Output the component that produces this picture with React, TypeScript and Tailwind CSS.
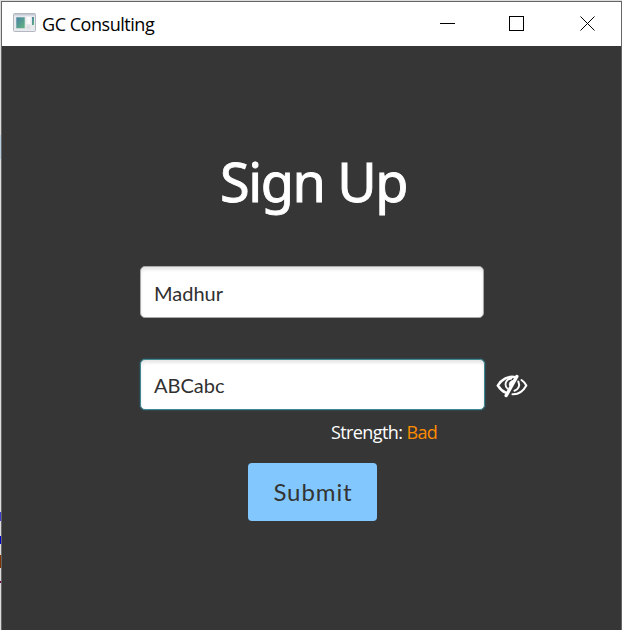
function AppIcon() {
  return (
    <svg width="24" height="20" viewBox="0 0 24 20">
      <defs>
        <linearGradient id="pane" x1="0" y1="0" x2="1" y2="1">
          <stop offset="0" stopColor="#4a7fa8" />
          <stop offset="1" stopColor="#63b87c" />
        </linearGradient>
      </defs>
      <rect x="0.5" y="0.5" width="22" height="18" rx="1" fill="#e9eaee" stroke="#b3b7c1" />
      <rect x="1" y="1" width="21" height="1.500" fill="#c5cad4" />
      <rect x="3" y="4" width="9" height="11.500" fill="url(#pane)" stroke="#dfe3e6" strokeWidth="0.600" />
      <rect x="13.500" y="4" width="4" height="7" fill="#fafafa" />
      <rect x="19" y="4" width="2" height="8" fill="url(#pane)" />
      <rect x="13.500" y="12.500" width="4" height="3.500" fill="#dddfe3" />
    </svg>
  );
}

function EyeOff() {
  return (
    <svg width="32" height="24" viewBox="0 0 32 24" fill="none" stroke="#fff" strokeLinecap="round">
      <path d="M20 3.300C11.500 1.300 5 6 1.800 11.500C4 15 6.500 17.300 9.800 18.700" strokeWidth="2.400" />
      <path d="M25.500 6C27.700 7.500 29.200 9.300 30.300 11.500C27 17.500 21.500 20.500 16.500 20.200" strokeWidth="2.100" />
      <path d="M15.500 4.500C9.500 5 8 11 11.300 14.500" strokeWidth="1.800" />
      <path d="M22.300 7.500C24.500 12 22 15.700 18.500 16.700" strokeWidth="2" />
      <path d="M17.500 6.500C14.500 6.500 13 8.500 13.300 11.500L15 12Z" fill="#fff" strokeWidth="1" />
      <path d="M20.800 2.500L10.200 21.500" strokeWidth="3.500" />
    </svg>
  );
}

export default function App() {
  return (
    <div className="flex h-[630px] w-[622px] overflow-hidden bg-[#dcdcdc] pt-px font-['Open_Sans',sans-serif]">
      <div className="flex w-px shrink-0 flex-col">
        <div className="h-[134px]" />
        <div className="h-[24px] bg-[#b7cfe0]" />
        <div className="h-[353px]" />
        <div className="h-[9px] bg-[#4040d0]" />
        <div className="h-[15px]" />
        <div className="h-[8px] bg-[#0000cc]" />
        <div className="h-[11px]" />
        <div className="h-[13px] bg-[#803300]" />
        <div className="h-[13px]" />
        <div className="h-[2px] bg-[#700050]" />
      </div>
      <div className="flex min-w-0 flex-1 flex-col border-x border-t border-[#666] bg-[#363636]">
        <header className="flex h-[44px] shrink-0 items-center bg-white pl-[11px] text-black">
          <div className="-mt-0.5"><AppIcon /></div>
          <h1 className="ml-[5px] -mt-px whitespace-nowrap text-[18px] leading-6 tracking-[-0.460px]">GC Consulting</h1>
          <svg className="-mt-0.5 ml-auto mr-[25px]" width="157" height="18" viewBox="0 0 157 18" fill="none" stroke="#000">
            <path d="M1 9.500h15M70.500 2.500h14v14h-14z" shapeRendering="crispEdges" />
            <path d="M141.500 2.500l14 14M155.500 2.500l-14 14" />
          </svg>
        </header>
        <main className="flex flex-1 flex-col pl-[138px]">
          <h2 className="ml-[80px] mt-[99px] h-[72px] whitespace-nowrap font-['Comic_Sans_MS','Noto_Sans',sans-serif] text-[54px] font-normal leading-[72px] tracking-[-1.400px] text-white [-webkit-text-stroke:0.9px_white] [stroke-linejoin:round]">Sign Up</h2>
          <input className="mt-[49px] h-[52px] w-[344px] rounded-[5px] border border-[#aaa] bg-white px-[13px] pt-px font-['Comic_Sans_MS',Lato,sans-serif] text-[20px] text-[#303030] shadow-[inset_0_3px_3px_#e8e8e8] outline-none" defaultValue="Madhur" />
          <div className="mt-[41px] flex items-center">
            <input className="h-[51px] w-[345px] rounded-[5px] border border-[#408790] bg-white px-[13px] font-['Comic_Sans_MS',Lato,sans-serif] text-[20px] text-[#303030] shadow-[inset_0_3px_3px_#e8e8e8,0_0_2px_#287482] outline-none" defaultValue="ABCabc" />
            <button className="ml-[11px] mt-0.5" aria-label="Hide password"><EyeOff /></button>
          </div>
          <p className="ml-[191px] mt-[10px] h-6 whitespace-nowrap text-[18px] leading-6 tracking-[-0.600px] text-white">Strength: <span className="text-[#ff8c00]">Bad</span></p>
          <button className="ml-[108px] mt-[19px] h-[58px] w-[129px] rounded-[4px] bg-[#82c8ff] pl-px font-['Century_Gothic',Lato,sans-serif] text-[24px] tracking-[0.900px] text-[#333]">Submit</button>
        </main>
      </div>
    </div>
  );
}
